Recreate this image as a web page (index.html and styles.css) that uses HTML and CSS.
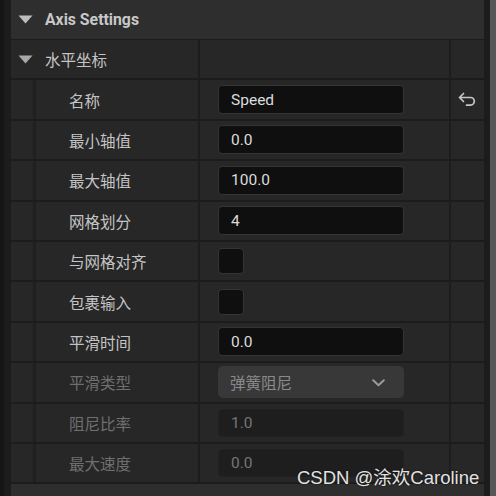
FILE: index.html
```html
<!DOCTYPE html>
<html>
<head>
<meta charset="utf-8">
<link rel="stylesheet" href="styles.css">
</head>
<body>
<div class="frame">
  <div class="edge"></div>
  <div class="panel">
    <div class="header">
      <svg class="tri" width="15" height="9" viewBox="0 0 15 9"><polygon points="0.5,0.5 14.5,0.5 7.5,8.5" fill="#bdbdbd"/></svg>
      <span class="htitle">Axis Settings</span>
    </div>
    <div class="row group">
      <div class="gname">
        <svg class="tri" width="15" height="9" viewBox="0 0 15 9"><polygon points="0.5,0.5 14.5,0.5 7.5,8.5" fill="#a9a9a9"/></svg>
        <span class="label">水平坐标</span>
      </div>
      <div class="div"></div>
      <div class="val"></div>
      <div class="div"></div>
      <div class="reset"></div>
    </div>

    <div class="row">
      <div class="gutter"></div>
      <div class="name"><span class="label">名称</span></div>
      <div class="div"></div>
      <div class="val"><div class="input">Speed</div></div>
      <div class="div"></div>
      <div class="reset">
        <svg width="18" height="15" viewBox="0 0 18 15"><path d="M5.5 1.5 L1.5 5.5 L5.5 9.5 M1.5 5.5 H12.5 A3.8 3.8 0 0 1 12.5 13.1 H8.5" fill="none" stroke="#c6c6c6" stroke-width="1.7" stroke-linecap="round" stroke-linejoin="round"/></svg>
      </div>
    </div>

    <div class="row">
      <div class="gutter"></div>
      <div class="name"><span class="label">最小轴值</span></div>
      <div class="div"></div>
      <div class="val"><div class="input">0.0</div></div>
      <div class="div"></div>
      <div class="reset"></div>
    </div>

    <div class="row">
      <div class="gutter"></div>
      <div class="name"><span class="label">最大轴值</span></div>
      <div class="div"></div>
      <div class="val"><div class="input">100.0</div></div>
      <div class="div"></div>
      <div class="reset"></div>
    </div>

    <div class="row">
      <div class="gutter"></div>
      <div class="name"><span class="label">网格划分</span></div>
      <div class="div"></div>
      <div class="val"><div class="input">4</div></div>
      <div class="div"></div>
      <div class="reset"></div>
    </div>

    <div class="row">
      <div class="gutter"></div>
      <div class="name"><span class="label">与网格对齐</span></div>
      <div class="div"></div>
      <div class="val"><div class="check"></div></div>
      <div class="div"></div>
      <div class="reset"></div>
    </div>

    <div class="row">
      <div class="gutter"></div>
      <div class="name"><span class="label">包裹输入</span></div>
      <div class="div"></div>
      <div class="val"><div class="check"></div></div>
      <div class="div"></div>
      <div class="reset"></div>
    </div>

    <div class="row">
      <div class="gutter"></div>
      <div class="name"><span class="label">平滑时间</span></div>
      <div class="div"></div>
      <div class="val"><div class="input">0.0</div></div>
      <div class="div"></div>
      <div class="reset"></div>
    </div>

    <div class="row">
      <div class="gutter"></div>
      <div class="name"><span class="label dim">平滑类型</span></div>
      <div class="div"></div>
      <div class="val">
        <div class="select"><span>弹簧阻尼</span>
          <svg width="13" height="8" viewBox="0 0 13 8"><path d="M1.2 1.2 L6.5 6.3 L11.8 1.2" fill="none" stroke="#9a9a9a" stroke-width="2" stroke-linecap="round" stroke-linejoin="round"/></svg>
        </div>
      </div>
      <div class="div"></div>
      <div class="reset"></div>
    </div>

    <div class="row">
      <div class="gutter"></div>
      <div class="name"><span class="label dim">阻尼比率</span></div>
      <div class="div"></div>
      <div class="val"><div class="input off">1.0</div></div>
      <div class="div"></div>
      <div class="reset"></div>
    </div>

    <div class="row">
      <div class="gutter"></div>
      <div class="name"><span class="label dim">最大速度</span></div>
      <div class="div"></div>
      <div class="val"><div class="input off">0.0</div></div>
      <div class="div"></div>
      <div class="reset"></div>
    </div>

    <div class="nexthead"></div>
  </div>
  <div class="scroll"><div class="track"></div><div class="thumb"></div></div>
  <div class="watermark">CSDN @涂欢Caroline</div>
</div>
</body>
</html>
```

FILE: styles.css
```css
* { box-sizing: border-box; }
html, body { margin: 0; padding: 0; }
body {
  background: #1b1b1b;
  font-family: Roboto, "Noto Sans CJK SC", sans-serif;
  font-size: 15.5px;
  width: 496px;
  height: 496px;
  overflow: hidden;
}
.frame {
  position: relative;
  display: flex;
  height: 496px;
}
.edge {
  width: 11px;
  flex: none;
  background: linear-gradient(to right, #151515 0, #151515 4px, #1c1c1c 4px);
}
.panel {
  flex: 1;
  display: flex;
  flex-direction: column;
  background: #1c1c1c;
}
.header {
  height: 40px;
  flex: none;
  display: flex;
  align-items: center;
  background: #2e2e2e;
  border-bottom: 1px solid #1b1b1b;
  padding-left: 7px;
}
.tri { flex: none; display: block; }
.htitle {
  margin-left: 12px;
  font-weight: bold;
  font-size: 15.8px;
  color: #c8c8c8;
  margin-top: -1px;
}
.row {
  height: 40.4px;
  flex: none;
  display: flex;
  background: #272727;
  border-bottom: 2px solid #1c1c1c;
}
.row.group .gname {
  width: 187px;
  display: flex;
  align-items: center;
  padding-left: 7px;
}
.row.group .gname .label { margin-left: 12px; color: #c4c4c4; }
.gutter {
  width: 25px;
  flex: none;
  background: linear-gradient(to right, #272727 0, #272727 21px, #222 22px, #1e1e1e 25px);
}
.name {
  width: 162px;
  flex: none;
  display: flex;
  align-items: center;
  padding-left: 33px;
}
.label { color: #c4c4c4; white-space: nowrap; }
.label.dim { color: #6f6f6f; }
.div {
  width: 2px;
  flex: none;
  background: #1d1d1d;
}
.val {
  width: 249px;
  flex: none;
  display: flex;
  align-items: center;
  padding-left: 18px;
}
.reset {
  flex: 1;
  display: flex;
  align-items: center;
  justify-content: center;
  padding-right: 2px;
}
.input {
  width: 186px;
  height: 29px;
  border-radius: 4px;
  background: #0f0f0f;
  border: 1px solid #343434;
  color: #dcdcdc;
  padding-left: 12px;
  display: flex;
  align-items: center;
  font-size: 15.5px;
}
.input.off {
  height: 28px;
  background: #1e1e1e;
  border-color: #222222;
  color: #767676;
}
.check {
  width: 26px;
  height: 26px;
  border-radius: 4px;
  background: #0f0f0f;
  border: 1px solid #343434;
}
.select {
  width: 186px;
  height: 32px;
  border-radius: 5px;
  background: #383838;
  color: #8a8a8a;
  display: flex;
  align-items: center;
  justify-content: space-between;
  padding-left: 12px;
  padding-right: 19px;
}
.select svg { display: block; margin-top: 1px; }
.nexthead {
  flex: 1;
  background: #2e2e2e;
}
.scroll {
  width: 12px;
  flex: none;
  display: flex;
}
.track { width: 6px; background: #1c1c1c; }
.thumb { width: 6px; background: #575757; }
.watermark {
  position: absolute;
  left: 297px;
  top: 463px;
  font-family: "Liberation Sans", "Noto Sans CJK SC", sans-serif;
  font-size: 18.5px;
  color: #e2e2e2;
  white-space: nowrap;
  text-shadow: 0 0 2px rgba(0,0,0,0.6);
}
```
